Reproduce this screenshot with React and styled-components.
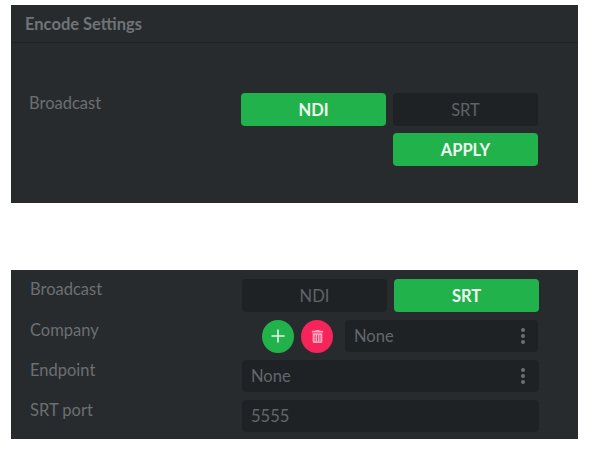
import React from "react";
import styled, { createGlobalStyle } from "styled-components";
import { FaTrashAlt } from "react-icons/fa";

const GlobalStyle = createGlobalStyle`
  html, body {
    margin: 0;
    background: #fff;
    font-family: Lato, "Liberation Sans", sans-serif;
  }
`;

const Page = styled.div`
  width: 597px;
  height: 454px;
  padding: 5px 0 0 11px;
  box-sizing: border-box;
  display: flex;
  flex-direction: column;
  gap: 67px;
`;

const Panel = styled.section`
  width: 567px;
  height: ${(p) => p.$height}px;
  background: #282b2e;
  box-sizing: border-box;
`;

const Header = styled.h2`
  margin: 0;
  height: 38px;
  box-sizing: border-box;
  padding: 0 0 0 14px;
  display: flex;
  align-items: center;
  border-bottom: 1px solid #1e2125;
  color: #6f7478;
  font-size: 16.5px;
  font-weight: 700;
`;

const Form = styled.div`
  display: grid;
  grid-template-columns: 205px 145px 145px;
  grid-template-rows: 33px;
  grid-auto-rows: ${(p) => p.$rowHeight}px;
  column-gap: 7px;
  row-gap: ${(p) => p.$rowGap}px;
  padding: ${(p) => p.$top}px 0 0 ${(p) => p.$left}px;
`;

const Label = styled.div`
  grid-column: 1;
  color: #6b6f72;
  font-size: 16.5px;
  line-height: 20px;
`;

const Toggle = styled.button`
  border: 0;
  border-radius: 4px;
  padding: 0;
  font-family: inherit;
  font-size: 16.5px;
  font-weight: ${(p) => (p.$active ? 700 : 400)};
  color: ${(p) => (p.$active ? "#eef6f0" : "#5f6366")};
  background: ${(p) => (p.$active ? "#22b24c" : "#1f2225")};
`;

const ApplyButton = styled(Toggle)`
  grid-column: 3;
`;

const CompanyField = styled.div`
  grid-column: 2 / 4;
  display: flex;
  align-items: center;
  padding-left: 20px;
  gap: 7px;
`;

const RoundButton = styled.button`
  width: 32px;
  height: 33px;
  flex: none;
  padding: 0;
  border: 0;
  border-radius: 50%;
  display: flex;
  align-items: center;
  justify-content: center;
  background: ${(p) => p.$bg};
  color: ${(p) => p.$fg};
`;

const Select = styled.div`
  grid-column: ${(p) => (p.$inline ? "auto" : "2 / 4")};
  flex: ${(p) => (p.$inline ? 1 : "none")};
  margin: 0 ${(p) => (p.$inline ? 1 : 0)}px 0 ${(p) => (p.$inline ? 5 : 0)}px;
  height: 32px;
  box-sizing: border-box;
  padding: 0 9px;
  display: flex;
  align-items: center;
  justify-content: space-between;
  border-radius: 4px;
  background: #1f2225;
  color: #63676a;
  font-size: 16.5px;
`;

const Dots = styled.span`
  display: flex;
  flex-direction: column;
  gap: 2px;
  margin-right: ${(p) => (p.$inline ? 4 : 5)}px;

  i {
    width: 4px;
    height: 4px;
    border-radius: 50%;
    background: #6d7073;
  }
`;

const Kebab = ({ inline }) => (
  <Dots $inline={inline}>
    <i />
    <i />
    <i />
  </Dots>
);

const PlusIcon = () => (
  <svg width="14" height="14" viewBox="0 0 14 14">
    <path d="M7 0.5V13.5M0.5 7H13.5" stroke="#e6f5ea" strokeWidth="1.6" />
  </svg>
);

export default function App() {
  return (
    <Page>
      <GlobalStyle />
      <Panel $height={198}>
        <Header>Encode Settings</Header>
        <Form $top={50} $left={18} $rowHeight={33} $rowGap={7}>
          <Label>Broadcast</Label>
          <Toggle $active>NDI</Toggle>
          <Toggle>SRT</Toggle>
          <ApplyButton $active>APPLY</ApplyButton>
        </Form>
      </Panel>
      <Panel $height={169}>
        <Form $top={9} $left={19} $rowHeight={32} $rowGap={8}>
          <Label>Broadcast</Label>
          <Toggle>NDI</Toggle>
          <Toggle $active>SRT</Toggle>
          <Label>Company</Label>
          <CompanyField>
            <RoundButton $bg="#22b24c">
              <PlusIcon />
            </RoundButton>
            <RoundButton $bg="#f5245b" $fg="#f9a3b8">
              <FaTrashAlt size={13} />
            </RoundButton>
            <Select $inline>
              None
              <Kebab inline />
            </Select>
          </CompanyField>
          <Label>Endpoint</Label>
          <Select>
            None
            <Kebab />
          </Select>
          <Label>SRT port</Label>
          <Select>5555</Select>
        </Form>
      </Panel>
    </Page>
  );
}
